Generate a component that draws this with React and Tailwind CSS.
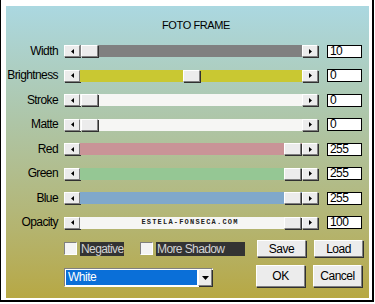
import React from "react";

const raised =
  "bg-[#ececec] border border-t-white border-l-white border-r-[#808080] border-b-[#808080] shadow-[1px_1px_0_#303030]";

const rows = [
  { label: "Width", track: "bg-[#808080]", thumb: "ml-[1px]", value: "10" },
  { label: "Brightness", track: "bg-[#c9c832]", thumb: "ml-[103px]", value: "0" },
  { label: "Stroke", track: "bg-[#f6f6f4]", thumb: "ml-[1px]", value: "0" },
  { label: "Matte", track: "bg-[#f6f6f4]", thumb: "ml-[1px]", value: "0" },
  { label: "Red", track: "bg-[#c99497]", thumb: "ml-auto mr-[1px]", value: "255" },
  { label: "Green", track: "bg-[#95c794]", thumb: "ml-auto mr-[1px]", value: "255" },
  { label: "Blue", track: "bg-[#80a8cb]", thumb: "ml-auto mr-[1px]", value: "255" },
  {
    label: "Opacity",
    track: "bg-[#f6f6f4]",
    thumb: "mr-[1px]",
    value: "100",
    text: "ESTELA-FONSECA.COM",
  },
];

const ArrowLeft = () => (
  <svg width="3" height="5" viewBox="0 0 3 5">
    <path d="M3 0 L0 2.5 L3 5z" fill="#000" />
  </svg>
);

const ArrowRight = () => (
  <svg width="3" height="5" viewBox="0 0 3 5">
    <path d="M0 0 L3 2.5 L0 5z" fill="#000" />
  </svg>
);

const ScrollBar = ({ track, thumb, text }) => (
  <div className="flex h-[12px] w-[254px]">
    <div className={`w-[16px] h-full flex items-center justify-center ${raised}`}>
      <ArrowLeft />
    </div>
    <div className={`flex-1 flex items-stretch ${track}`}>
      {text && (
        <div className="flex-1 flex items-center justify-center pl-[16px] font-['Liberation_Mono',monospace] font-bold text-[7px] tracking-[1.2px] text-[#222]">
          {text}
        </div>
      )}
      <div className={`w-[17px] h-full ${raised} ${thumb}`} />
    </div>
    <div className={`w-[16px] h-full flex items-center justify-center ${raised}`}>
      <ArrowRight />
    </div>
  </div>
);

const Check = ({ label, w }) => (
  <div className="flex items-center">
    <div className="w-[13px] h-[13px] bg-[#f4f4f4] border border-t-[#808080] border-l-[#808080] border-r-white border-b-white" />
    <div
      className={`ml-[3px] h-[14px] bg-[#333333] text-[#d4d4d4] text-[12px] tracking-[-0.6px] leading-[14px] pl-[1px] ${w}`}
    >
      {label}
    </div>
  </div>
);

const Button = ({ children, h }) => (
  <div
    className={`w-[49px] ${h} flex items-center justify-center text-[12px] tracking-[-0.5px] text-black ${raised}`}
  >
    {children}
  </div>
);

export default function App() {
  return (
    <div className="w-[374px] h-[302px] bg-white border-l border-r-2 border-b-2 border-black pt-[6px] pl-[5px] pr-[3px] pb-[2px] font-['Liberation_Sans',Arial,sans-serif]">
      <div className="w-[363px] h-[292px] bg-gradient-to-b from-[#abd8e1] via-[#aec5a6] via-40% to-[#b7a843] pt-[12px]">
        <div className="h-[14px] text-center pl-[17px] text-[11px] tracking-[-0.4px] leading-[14px] text-black">
          FOTO FRAME
        </div>
        <div className="mt-[12.5px] flex flex-col gap-[11.5px]">
          {rows.map((r) => (
            <div key={r.label} className="flex items-center h-[13px]">
              <div className="w-[52px] text-right text-[12px] tracking-[-0.6px] leading-[13px] text-black">
                {r.label}
              </div>
              <div className="ml-[6px]">
                <ScrollBar track={r.track} thumb={r.thumb} text={r.text} />
              </div>
              <div className="ml-[9px] w-[35px] h-[13px] bg-white border border-black text-[12px] tracking-[-0.6px] leading-[11px] pl-[2px] text-black">
                {r.value}
              </div>
            </div>
          ))}
        </div>
        <div className="mt-[11px] pl-[58px] flex items-center h-[17px]">
          <Check label="Negative" w="w-[44px]" />
          <div className="ml-[16px]">
            <Check label="More Shadow" w="w-[89px]" />
          </div>
          <div className="ml-[12px] flex gap-[8px]">
            <Button h="h-[17px]">Save</Button>
            <Button h="h-[17px]">Load</Button>
          </div>
        </div>
        <div className="mt-[8px] pl-[58px] flex items-end h-[22px]">
          <div className="w-[149px] h-[19px] flex items-stretch border border-t-[#808080] border-l-[#808080] border-r-white border-b-white">
            <div className="flex-1 bg-[#0a6fd8] border border-white text-white text-[12px] tracking-[-0.5px] leading-[15px] pl-[2px]">
              White
            </div>
            <div className={`w-[14px] flex items-center justify-center ${raised}`}>
              <svg width="7" height="4" viewBox="0 0 7 4">
                <path d="M0 0 L7 0 L3.5 4z" fill="#000" />
              </svg>
            </div>
          </div>
          <div className="ml-[43px] flex gap-[8px]">
            <Button h="h-[22px]">OK</Button>
            <Button h="h-[22px]">Cancel</Button>
          </div>
        </div>
      </div>
    </div>
  );
}
